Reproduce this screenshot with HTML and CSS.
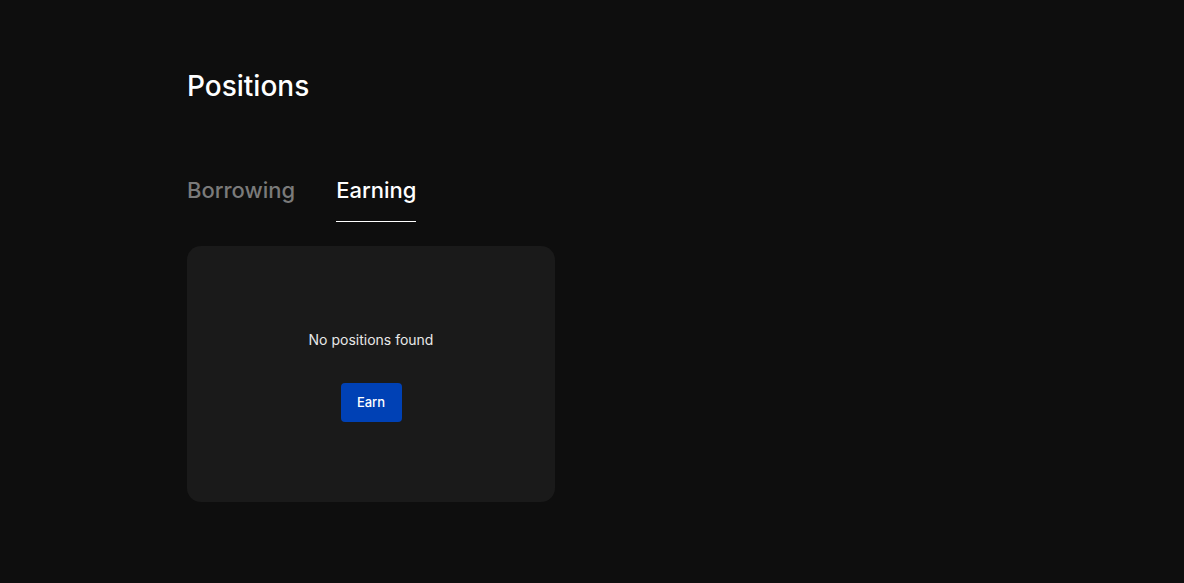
FILE: index.html
```html
<!DOCTYPE html>
<html>
<head>
<meta charset="utf-8">
<link rel="stylesheet" href="styles.css">
</head>
<body>
<main class="page">
  <h1 class="title">Positions</h1>
  <nav class="tabs">
    <div class="tab">Borrowing</div>
    <div class="tab active">Earning</div>
  </nav>
  <section class="card">
    <p class="empty">No positions found</p>
    <button class="btn">Earn</button>
  </section>
</main>
</body>
</html>
```
FILE: styles.css
```css
html, body {
  margin: 0;
  padding: 0;
  background: #0e0e0e;
  height: 100%;
}
body {
  font-family: Inter, "Noto Sans", sans-serif;
  color: #ffffff;
}
.page {
  padding: 68px 0 0 187px;
}
.title {
  margin: 0;
  font-size: 28px;
  font-weight: 500;
  line-height: 36px;
}
.tabs {
  display: flex;
  gap: 41px;
  margin-top: 71px;
}
.tab {
  font-size: 22px;
  font-weight: 500;
  line-height: 30px;
  padding-bottom: 16px;
  color: #7a7a7a;
}
.tab.active {
  color: #ffffff;
  border-bottom: 1px solid #ffffff;
}
.card {
  box-sizing: border-box;
  margin-top: 24px;
  width: 368px;
  height: 256px;
  padding-top: 4px;
  background: #1a1a1a;
  border-radius: 14px;
  display: flex;
  flex-direction: column;
  align-items: center;
  justify-content: center;
  gap: 34px;
}
.empty {
  margin: 0;
  font-size: 14px;
  line-height: 18px;
  color: #e8e8e8;
}
.btn {
  width: 61px;
  height: 39px;
  border: 0;
  border-radius: 4px;
  background: #0041b5;
  color: #ffffff;
  font-family: inherit;
  font-size: 13px;
  font-weight: 500;
}
```
